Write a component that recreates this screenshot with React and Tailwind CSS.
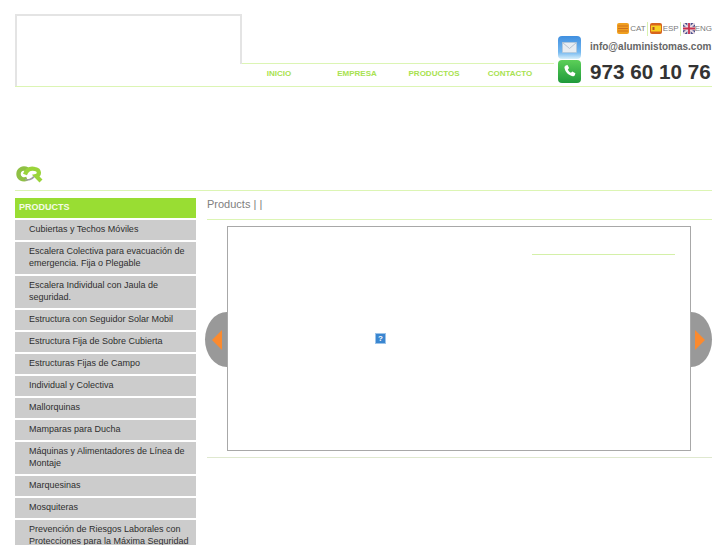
const items = [
  ["Cubiertas y Techos Móviles"],
  ["Escalera Colectiva para evacuación de", "emergencia. Fija o Plegable"],
  ["Escalera Individual con Jaula de", "seguridad."],
  ["Estructura con Seguidor Solar Mobil"],
  ["Estructura Fija de Sobre Cubierta"],
  ["Estructuras Fijas de Campo"],
  ["Individual y Colectiva"],
  ["Mallorquinas"],
  ["Mamparas para Ducha"],
  ["Máquinas y Alimentadores de Línea de", "Montaje"],
  ["Marquesinas"],
  ["Mosquiteras"],
  ["Prevención de Riesgos Laborales con", "Protecciones para la Máxima Seguridad"],
];

function Cat() {
  return (
    <svg width="12" height="11" viewBox="0 0 12 11">
      <rect width="12" height="11" rx="2" fill="#f0a020" />
      <path d="M1 3h10M1 5.500h10M1 8h10" stroke="#d0701c" strokeWidth="1" />
    </svg>
  );
}
function Esp() {
  return (
    <svg width="12" height="11" viewBox="0 0 12 11">
      <rect width="12" height="11" rx="2" fill="#d8641c" />
      <rect x="1" y="2.500" width="10" height="6" fill="#f8d020" />
      <rect x="2.500" y="4" width="2" height="3" fill="#b05020" />
    </svg>
  );
}
function Eng() {
  return (
    <svg width="12" height="11" viewBox="0 0 12 11">
      <rect width="12" height="11" rx="2" fill="#4a4f8c" />
      <path d="M0 0l12 11M12 0L0 11" stroke="#e8d8e0" strokeWidth="2" />
      <path d="M6 0v11M0 5.500h12" stroke="#e8e0e8" strokeWidth="3.400" />
      <path d="M6 0v11M0 5.500h12" stroke="#c8304c" strokeWidth="1.800" />
    </svg>
  );
}
function MailIcon() {
  return (
    <svg width="23" height="23" viewBox="0 0 23 23" className="shrink-0">
      <defs>
        <linearGradient id="m" x1="0" y1="0" x2="0" y2="1">
          <stop offset="0" stopColor="#3f8fe0" />
          <stop offset="0.7" stopColor="#74b8f0" />
          <stop offset="1" stopColor="#d8effa" />
        </linearGradient>
      </defs>
      <rect width="23" height="23" rx="4" fill="url(#m)" />
      <rect x="4.500" y="6.500" width="14" height="10" fill="#e8edf2" stroke="#b9c6d4" strokeWidth="0.600" />
      <path d="M4.500 6.500l7 6 7-6" fill="none" stroke="#a8b6c6" strokeWidth="0.800" />
    </svg>
  );
}
function PhoneIcon() {
  return (
    <svg width="23" height="23" viewBox="0 0 23 23" className="shrink-0">
      <defs>
        <linearGradient id="p" x1="0" y1="0" x2="0" y2="1">
          <stop offset="0" stopColor="#5ccf58" />
          <stop offset="1" stopColor="#1f9a3a" />
        </linearGradient>
      </defs>
      <rect width="23" height="23" rx="4" fill="url(#p)" />
      <path d="M7.500 5.500l2 -.6 1.600 3.200-1.300 1.300c.6 1.500 1.700 2.700 3.200 3.400l1.300-1.300 3.100 1.700-.6 2c-.3.8-1.100 1.200-2 1-4.400-1-7.700-4.300-8.300-8.500-.1-.8.300-1.500 1-1.700z" fill="#fff" />
    </svg>
  );
}
function Logo() {
  return (
    <svg width="28" height="18" viewBox="0 0 28 18">
      <path d="M11.500 4.500C7 2 2.500 4.500 2.500 9c0 4 4 6.500 8.500 4.800" fill="none" stroke="#8fc044" strokeWidth="4.400" />
      <path d="M9 9.500c2-5 6-6.500 10-5.500 5 1 5 6 1 7l5 5" fill="none" stroke="#9ad43a" strokeWidth="4.200" />
      <path d="M9 14.500c3 1 7 0 9-3" fill="none" stroke="#a0a0a0" strokeWidth="1.800" />
    </svg>
  );
}

function NavLink({ w, children }) {
  return (
    <a className="block text-center text-[8px] font-bold leading-[12px] text-[#a8e250]" style={{ width: w }}>
      {children}
    </a>
  );
}

export default function App() {
  return (
    <div className="h-[545px] w-[727px] overflow-hidden bg-white pl-[15px] pr-[15px] pt-[14px] font-['Liberation_Sans',Arial,sans-serif]">
      {/* header */}
      <header className="flex h-[73px] border-b border-[#dcf5b4]">
        <div className="h-full w-[227px] shrink-0 border-l-2 border-[#e4e4e4]">
          <div className="h-[50px] border-r-2 border-t-2 border-[#e4e4e4]" />
        </div>
        <div className="flex w-[312px] shrink-0 flex-col">
          <div className="h-[50px] border-b border-[#dcf5b4]" />
          <nav className="flex pt-[4px]">
            <NavLink w="74px">INICIO</NavLink>
            <NavLink w="82px">EMPRESA</NavLink>
            <NavLink w="72px">PRODUCTOS</NavLink>
            <NavLink w="80px">CONTACTO</NavLink>
          </nav>
        </div>
        <div className="flex min-w-0 flex-1 flex-col items-end pl-[4px]">
          <div className="mt-[9px] flex h-[11px] items-center text-[8px] leading-[11px] text-[#7a7a7a]">
            <Cat /><span className="ml-[1px]">CAT</span>
            <span className="mx-[1.500px] h-[14px] w-px bg-[#d8f2b0]" />
            <Esp /><span className="ml-[1px]">ESP</span>
            <span className="mx-[1.500px] h-[14px] w-px bg-[#d8f2b0]" />
            <Eng /><span>ENG</span>
          </div>
          <div className="mt-[2px] flex h-[24px] w-full items-start">
            <MailIcon />
            <span className="ml-[9px] mt-[5px] whitespace-nowrap text-[10px] font-bold leading-[12px] text-[#666666]">info@aluministomas.com</span>
          </div>
          <div className="flex h-[24px] w-full items-start">
            <PhoneIcon />
            <span className="ml-[9px] whitespace-nowrap text-[20.700px] font-bold leading-[24px] text-[#333333]">973 60 10 76</span>
          </div>
        </div>
      </header>

      {/* logo strip */}
      <div className="flex h-[104px] items-end border-b border-[#dcf5b4] pb-[7px] pl-[1px]">
        <Logo />
      </div>

      <div className="mt-[7px] flex">
        {/* sidebar */}
        <aside className="flex w-[181px] shrink-0 flex-col gap-[2px]">
          <div className="flex h-[20px] items-center bg-[#99dd33] pl-[4px] text-[9px] font-bold text-[#f4fbe6]">PRODUCTS</div>
          {items.map((lines) => (
            <div key={lines[0]} className="whitespace-nowrap bg-[#cccccc] pb-[5px] pl-[14px] pt-[3px] text-[9px] leading-[12px] text-[#2e2e2e]">
              {lines.map((l) => (
                <div key={l}>{l}</div>
              ))}
            </div>
          ))}
        </aside>

        {/* content */}
        <main className="ml-[11px] min-w-0 flex-1">
          <h1 className="h-[22px] border-b border-[#dcf5b4] text-[11px] font-normal leading-[12px] text-[#808080]">Products | |</h1>
          <div className="relative mt-[6px] pl-[20px] pr-[21px]">
            <div className="relative h-[225px] border border-[#a8a8a8] bg-white">
              <div className="absolute left-[304px] top-[27px] h-px w-[143px] bg-[#d4f0a8]" />
              <div className="absolute left-[147px] top-[106px] flex h-[11px] w-[11px] items-center justify-center border border-[#9cc4ea] bg-[#3a86d0] text-[8px] font-bold leading-none text-white">?</div>
            </div>
            <button className="absolute left-[-2px] top-[86px] flex h-[55px] w-[22px] items-center justify-end rounded-l-[22px_27.500px] bg-[#999999] pr-[5px]">
              <svg width="10" height="20" viewBox="0 0 10 20"><path d="M10 0v20L0 10z" fill="#fb8a2e" /></svg>
            </button>
            <button className="absolute right-0 top-[86px] flex h-[55px] w-[21px] items-center rounded-r-[21px_27.500px] bg-[#999999] pl-[4px]">
              <svg width="10" height="20" viewBox="0 0 10 20"><path d="M0 0v20l10-10z" fill="#fb8a2e" /></svg>
            </button>
          </div>
          <div className="mt-[6px] border-b border-[#dfe8cf]" />
        </main>
      </div>
    </div>
  );
}
